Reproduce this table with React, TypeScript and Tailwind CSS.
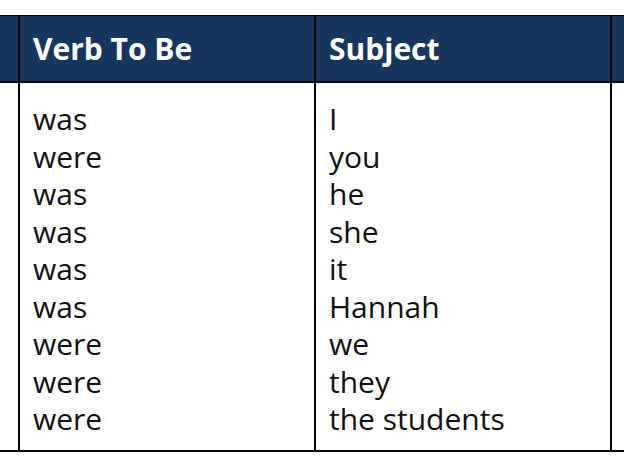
const rows: [string, string][] = [
  ["was", "I"],
  ["were", "you"],
  ["was", "he"],
  ["was", "she"],
  ["was", "it"],
  ["was", "Hannah"],
  ["were", "we"],
  ["were", "they"],
  ["were", "the students"],
];

export default function App() {
  return (
    <div className="w-[624px] h-[468px] overflow-hidden bg-white pt-[15px] font-['Open_Sans',sans-serif]">
      <div className="w-[660px] border-t border-b-2 border-black">
        {/* Header */}
        <div className="flex h-[67px] bg-[#17365d] border-b-2 border-black text-white">
          <div className="w-[18px] shrink-0" />
          <div className="w-[296px] shrink-0 border-l-2 border-black pl-[13px] flex items-center">
            <span className="text-[30px] font-bold">Verb To Be</span>
          </div>
          <div className="w-[296px] shrink-0 border-l-2 border-black pl-[13px] flex items-center">
            <span className="text-[30px] font-bold">Subject</span>
          </div>
          <div className="flex-1 border-l-2 border-black" />
        </div>

        {/* Body */}
        <div className="flex h-[367px] text-[30px] leading-[37.5px] text-[#111]">
          <div className="w-[18px] shrink-0" />
          <div className="w-[296px] shrink-0 border-l-2 border-black pl-[13px] pt-[17px]">
            {rows.map(([verb], i) => (
              <div key={i}>{verb}</div>
            ))}
          </div>
          <div className="w-[296px] shrink-0 border-l-2 border-black pl-[13px] pt-[17px]">
            {rows.map(([, subject], i) => (
              <div key={i}>{subject}</div>
            ))}
          </div>
          <div className="flex-1 border-l-2 border-black" />
        </div>
      </div>
    </div>
  );
}
